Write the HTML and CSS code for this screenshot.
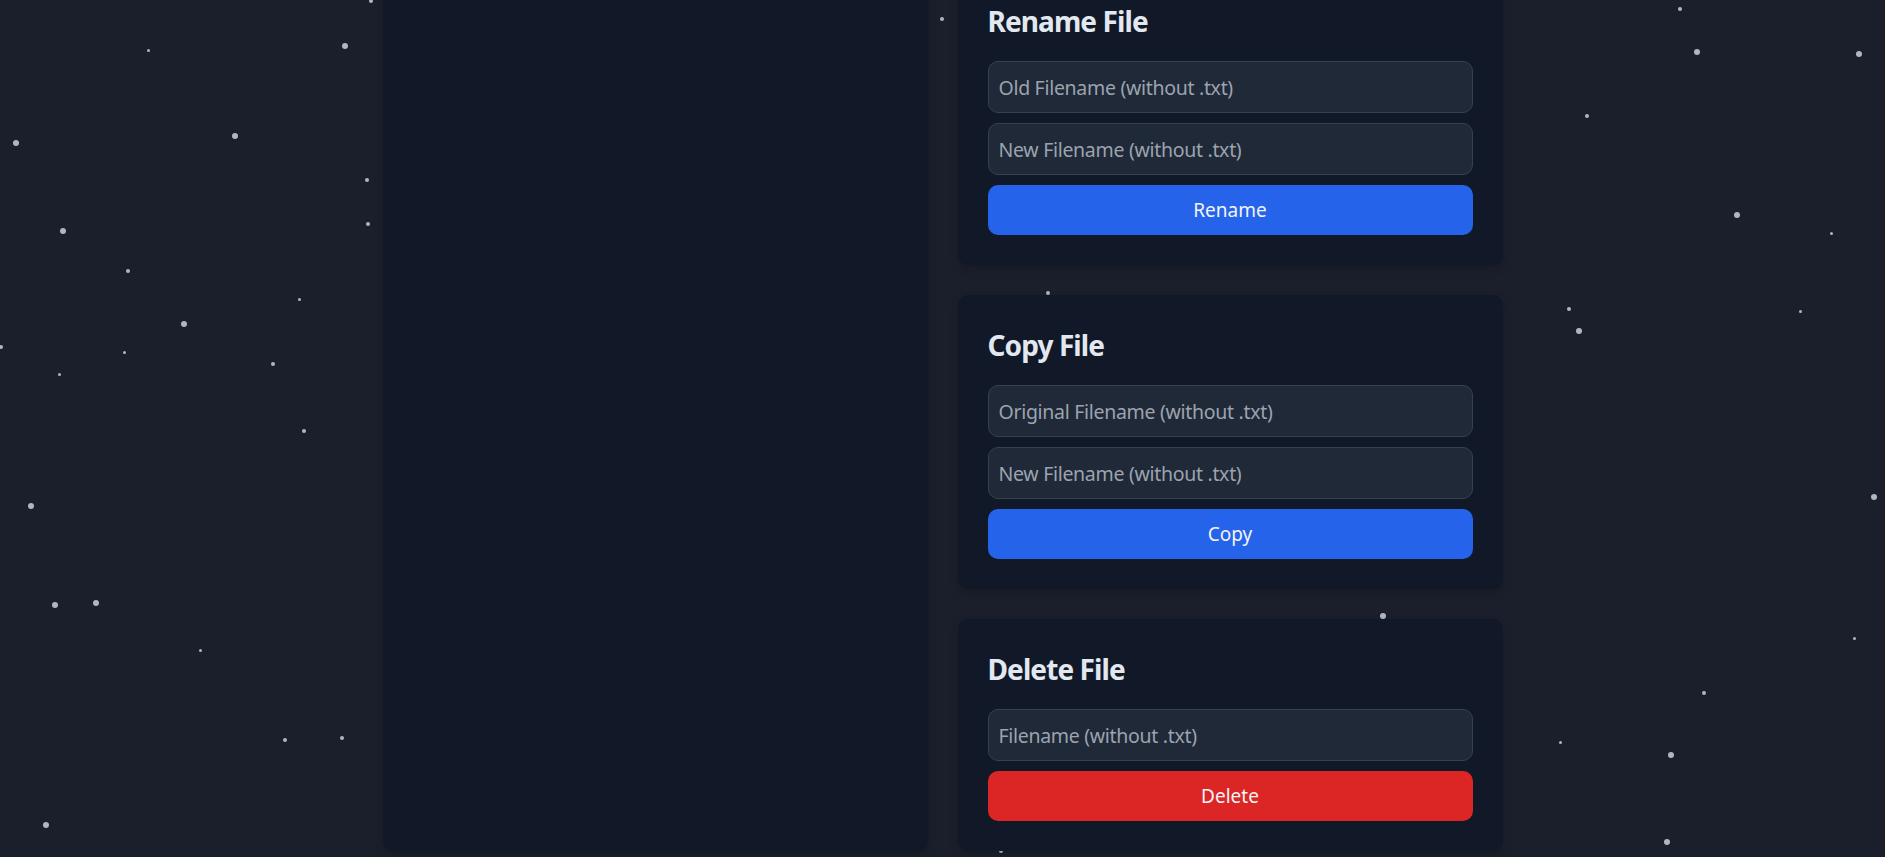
FILE: index.html
```html
<!DOCTYPE html>
<html lang="en">
<head>
<meta charset="utf-8">
<title>File Manager</title>
<link rel="stylesheet" href="styles.css">
</head>
<body>
<div class="stars" aria-hidden="true">
  <span class="star s3" style="left:370px;top:0px"></span>
  <span class="star s2" style="left:148px;top:50px"></span>
  <span class="star s4" style="left:343px;top:44px"></span>
  <span class="star s4" style="left:14px;top:141px"></span>
  <span class="star s4" style="left:233px;top:134px"></span>
  <span class="star s3" style="left:366px;top:179px"></span>
  <span class="star s3" style="left:367px;top:223px"></span>
  <span class="star s4" style="left:61px;top:229px"></span>
  <span class="star s3" style="left:127px;top:270px"></span>
  <span class="star s2" style="left:299px;top:299px"></span>
  <span class="star s4" style="left:182px;top:322px"></span>
  <span class="star s3" style="left:0px;top:346px"></span>
  <span class="star s2" style="left:124px;top:352px"></span>
  <span class="star s2" style="left:59px;top:374px"></span>
  <span class="star s3" style="left:272px;top:363px"></span>
  <span class="star s3" style="left:303px;top:430px"></span>
  <span class="star s4" style="left:29px;top:504px"></span>
  <span class="star s4" style="left:53px;top:603px"></span>
  <span class="star s4" style="left:94px;top:601px"></span>
  <span class="star s2" style="left:200px;top:650px"></span>
  <span class="star s3" style="left:284px;top:739px"></span>
  <span class="star s3" style="left:341px;top:737px"></span>
  <span class="star s4" style="left:44px;top:823px"></span>
  <span class="star s3" style="left:941px;top:18px"></span>
  <span class="star s3" style="left:1047px;top:292px"></span>
  <span class="star s4" style="left:1381px;top:614px"></span>
  <span class="star s3" style="left:1000px;top:850px"></span>
  <span class="star s3" style="left:1679px;top:8px"></span>
  <span class="star s4" style="left:1695px;top:50px"></span>
  <span class="star s4" style="left:1857px;top:52px"></span>
  <span class="star s3" style="left:1586px;top:115px"></span>
  <span class="star s4" style="left:1735px;top:213px"></span>
  <span class="star s2" style="left:1831px;top:233px"></span>
  <span class="star s3" style="left:1568px;top:308px"></span>
  <span class="star s4" style="left:1577px;top:329px"></span>
  <span class="star s2" style="left:1800px;top:311px"></span>
  <span class="star s4" style="left:1872px;top:495px"></span>
  <span class="star s2" style="left:1854px;top:638px"></span>
  <span class="star s3" style="left:1703px;top:692px"></span>
  <span class="star s2" style="left:1560px;top:742px"></span>
  <span class="star s4" style="left:1669px;top:753px"></span>
  <span class="star s4" style="left:1665px;top:840px"></span>
</div>

<main class="layout">
  <section class="panel"></section>

  <div class="column">
    <section class="card">
      <h2 class="card-title">Rename File</h2>
      <input class="field" type="text" placeholder="Old Filename (without .txt)">
      <input class="field" type="text" placeholder="New Filename (without .txt)">
      <button class="btn btn-blue" type="button">Rename</button>
    </section>

    <section class="card">
      <h2 class="card-title">Copy File</h2>
      <input class="field" type="text" placeholder="Original Filename (without .txt)">
      <input class="field" type="text" placeholder="New Filename (without .txt)">
      <button class="btn btn-blue" type="button">Copy</button>
    </section>

    <section class="card">
      <h2 class="card-title">Delete File</h2>
      <input class="field" type="text" placeholder="Filename (without .txt)">
      <button class="btn btn-red" type="button">Delete</button>
    </section>
  </div>
</main>
</body>
</html>
```

FILE: styles.css
```css
* {
  box-sizing: border-box;
}

html, body {
  margin: 0;
  padding: 0;
}

body {
  background: #1b1f2b;
  font-family: "Noto Sans", "Open Sans", "Liberation Sans", sans-serif;
  color: #e5e7eb;
  height: 857px;
  overflow: hidden;
  position: relative;
}

.stars {
  position: absolute;
  inset: 0;
  z-index: 0;
  pointer-events: none;
}

.star {
  position: absolute;
  display: block;
  border-radius: 50%;
  background: rgba(205, 208, 215, 0.85);
  transform: translate(-1px, -1px);
}

.s2 { width: 3px; height: 3px; }
.s3 { width: 4px; height: 4px; }
.s4 { width: 6px; height: 6px; }

.layout {
  position: relative;
  z-index: 1;
  width: 1120px;
  margin: -29px auto 0;
  display: grid;
  grid-template-columns: 1fr 1fr;
  gap: 30px;
}

.panel {
  background: #111827;
  border-radius: 10px;
  box-shadow: 0 4px 10px rgba(0, 0, 0, 0.15);
}

.column {
  display: flex;
  flex-direction: column;
  gap: 30px;
}

.card {
  background: #111827;
  border-radius: 10px;
  padding: 30px;
  display: flex;
  flex-direction: column;
  box-shadow: 0 4px 10px rgba(0, 0, 0, 0.15);
}

.card-title {
  margin: 0 0 20px;
  font-size: 28px;
  line-height: 40px;
  font-weight: 700;
  color: #e2e8f0;
  letter-spacing: -0.9px;
}

.field {
  display: block;
  width: 100%;
  height: 52px;
  margin: 0 0 10px;
  padding: 10px;
  font-family: inherit;
  font-size: 19.5px;
  line-height: 30px;
  color: #e5e7eb;
  background: #1f2937;
  border: 1px solid #374151;
  border-radius: 10px;
  outline: none;
}

.field::placeholder {
  color: #9ca3af;
  letter-spacing: -0.3px;
}

.btn {
  display: block;
  width: 100%;
  height: 50px;
  padding: 10px;
  border: none;
  border-radius: 10px;
  font-family: inherit;
  font-size: 19px;
  line-height: 30px;
  color: #f3f4f6;
  cursor: pointer;
}

.btn-blue {
  background: #2563eb;
}

.btn-red {
  background: #dc2626;
}
```
